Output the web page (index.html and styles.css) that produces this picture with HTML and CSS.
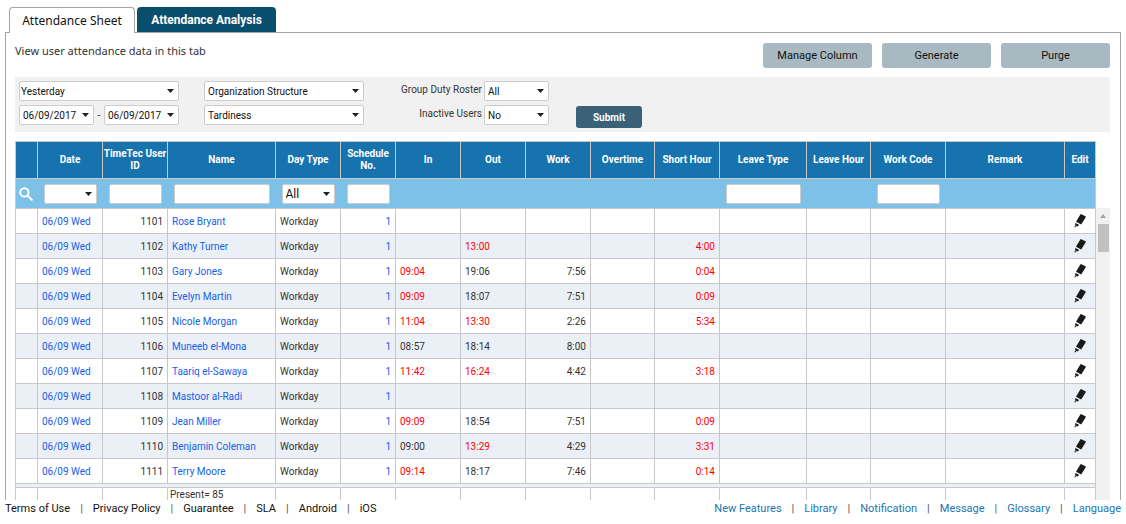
FILE: index.html
```
<!DOCTYPE html>
<html lang="en">
	<head>
		<meta charset="UTF-8" />
		<meta name="viewport" content="width=device-width, initial-scale=1.0" />
		<title>Attendance Sheet</title>
		<link rel="stylesheet" href="styles.css">
	</head>
	<body>
		<svg class="sprite" aria-hidden="true">
			<symbol id="pencil" viewBox="0 0 12 14">
				<path d="M7.4 0.2 11.4 2.3Q12 2.7 11.6 3.4L7.2 10.600 2 7.800 6.200 0.700Q6.700-.1 7.400.2Z" />
				<path d="M1.400 8.900 5.300 11.100 3.300 12.400 1 11.200ZM.8 11.800 2.500 12.800.6 13.600Z" />
			</symbol>
		</svg>
		<nav class="tabs">
			<a href="#" class="tab active">Attendance Sheet</a>
			<a href="#" class="tab">Attendance Analysis</a>
		</nav>
		<main class="panel">
			<div class="topbar">
				<p class="intro">View user attendance data in this tab</p>
				<div class="actions">
					<button class="btn">Manage Column</button>
					<button class="btn">Generate</button>
					<button class="btn">Purge</button>
				</div>
			</div>
			<form class="filters">
				<div class="filter-group">
					<select class="flush" aria-label="Period"><option>Yesterday</option></select>
					<div class="range">
						<select aria-label="From date"><option>06/09/2017</option></select>
						<span>-</span>
						<select aria-label="To date"><option>06/09/2017</option></select>
					</div>
				</div>
				<div class="filter-group">
					<select aria-label="Organization"><option>Organization Structure</option></select>
					<select aria-label="Attendance"><option>Tardiness</option></select>
				</div>
				<div class="filter-pairs">
					<label for="roster">Group Duty Roster</label>
					<select id="roster"><option>All</option></select>
					<label for="inactive">Inactive Users</label>
					<select id="inactive"><option>No</option></select>
				</div>
				<button type="button" class="submit">Submit</button>
			</form>
			<div class="grid">
				<table class="sheet">
					<colgroup>
						<col class="w-find" /><col class="w-mid" /><col class="w-mid" />
						<col class="w-name" /><col class="w-mid" /><col class="w-sched" />
						<col class="w-mid" /><col class="w-mid" /><col class="w-mid" />
						<col class="w-hour" /><col class="w-mid" /><col class="w-leave" />
						<col class="w-hour" /><col class="w-code" /><col /><col class="w-edit" />
					</colgroup>
					<thead>
						<tr class="heads">
							<th></th>
							<th>Date</th>
							<th>TimeTec User<br />ID</th>
							<th>Name</th>
							<th>Day Type</th>
							<th>Schedule<br />No.</th>
							<th>In</th>
							<th>Out</th>
							<th>Work</th>
							<th>Overtime</th>
							<th>Short Hour</th>
							<th>Leave Type</th>
							<th>Leave Hour</th>
							<th>Work Code</th>
							<th>Remark</th>
							<th>Edit</th>
						</tr>
						<tr class="search">
							<td class="find">
								<svg viewBox="0 0 14 14" aria-hidden="true">
									<circle cx="5.4" cy="5.4" r="4.2" />
									<path d="M8.6 8.6 12.8 12.8" />
								</svg>
							</td>
							<td><select aria-label="Date"><option></option></select></td>
							<td><input type="text" aria-label="TimeTec User ID" /></td>
							<td><input type="text" aria-label="Name" /></td>
							<td><select class="large" aria-label="Day Type"><option>All</option></select></td>
							<td><input type="text" aria-label="Schedule No." /></td>
							<td></td>
							<td></td>
							<td></td>
							<td></td>
							<td></td>
							<td><input type="text" aria-label="Leave Type" /></td>
							<td></td>
							<td><input type="text" aria-label="Work Code" /></td>
							<td></td>
							<td></td>
						</tr>
					</thead>
					<tbody id="rows"></tbody>
					<tfoot>
						<tr class="spacer">
							<td colspan="16"></td>
						</tr>
						<tr class="totals">
							<td></td>
							<td></td>
							<td></td>
							<td>Present= 85</td>
							<td></td>
							<td></td>
							<td></td>
							<td></td>
							<td></td>
							<td></td>
							<td></td>
							<td></td>
							<td></td>
							<td></td>
							<td></td>
							<td></td>
						</tr>
					</tfoot>
				</table>
				<div class="scrollbar">
					<div class="arrow"></div>
					<div class="thumb"></div>
				</div>
			</div>
		</main>
		<footer class="footer">
			<nav class="links">
				<a href="#">Terms of Use</a>
				<a href="#">Privacy Policy</a>
				<a href="#">Guarantee</a>
				<a href="#">SLA</a>
				<a href="#">Android</a>
				<a href="#">iOS</a>
			</nav>
			<nav class="links blue">
				<a href="#">New Features</a>
				<a href="#">Library</a>
				<a href="#">Notification</a>
				<a href="#">Message</a>
				<a href="#">Glossary</a>
				<a href="#">Language</a>
			</nav>
		</footer>
		<script>
			// id, name, in, out, work, short hour ("!" marks a late or early punch)
			const users = [
				["1101", "Rose Bryant", "", "", "", ""],
				["1102", "Kathy Turner", "", "!13:00", "", "4:00"],
				["1103", "Gary Jones", "!09:04", "19:06", "7:56", "0:04"],
				["1104", "Evelyn Martin", "!09:09", "18:07", "7:51", "0:09"],
				["1105", "Nicole Morgan", "!11:04", "!13:30", "2:26", "5:34"],
				["1106", "Muneeb el-Mona", "08:57", "18:14", "8:00", ""],
				["1107", "Taariq el-Sawaya", "!11:42", "!16:24", "4:42", "3:18"],
				["1108", "Mastoor al-Radi", "", "", "", ""],
				["1109", "Jean Miller", "!09:09", "18:54", "7:51", "0:09"],
				["1110", "Benjamin Coleman", "09:00", "!13:29", "4:29", "3:31"],
				["1111", "Terry Moore", "!09:14", "18:17", "7:46", "0:14"],
			];

			function punch(time) {
				if (time[0] === "!") return `<td class="red">${time.slice(1)}</td>`;
				return `<td>${time}</td>`;
			}

			document.querySelector("#rows").innerHTML = users
				.map(
					([id, name, timeIn, timeOut, work, short]) => `<tr>
						<td></td>
						<td><a href="#">06/09 Wed</a></td>
						<td class="num">${id}</td>
						<td><a href="#">${name}</a></td>
						<td>Workday</td>
						<td class="num"><a href="#">1</a></td>
						${punch(timeIn)}
						${punch(timeOut)}
						<td class="num">${work}</td>
						<td></td>
						<td class="num red">${short}</td>
						<td></td>
						<td></td>
						<td></td>
						<td></td>
						<td class="edit"><button aria-label="Edit ${name}"><svg><use href="#pencil" /></svg></button></td>
					</tr>`
				)
				.join("");
		</script>
	</body>
</html>
```

FILE: styles.css
```
* {
	box-sizing: border-box;
}
body {
	display: flex;
	flex-direction: column;
	height: 100vh;
	margin: 0;
	padding: 7px 5px 0;
	overflow: hidden;
	background: #fff;
	color: #333;
	font-family: Roboto, "Noto Sans", sans-serif;
	font-size: 10px;
}
a {
	color: #1660ea;
	text-decoration: none;
}
button,
input,
select {
	font-family: inherit;
	font-size: inherit;
	margin: 0;
}
button {
	cursor: pointer;
}
.sprite {
	display: none;
}

/* tabs */
.tabs {
	display: flex;
	gap: 2px;
	padding-left: 4px;
	height: 25px;
	flex: none;
}
.tab {
	display: flex;
	align-items: center;
	justify-content: center;
	width: 139px;
	background: #0a4e6e;
	border-radius: 4px 4px 0 0;
	color: #fff;
	font-size: 12px;
	font-weight: 700;
}
.tab.active {
	width: 126px;
	height: 26px;
	background: #fff;
	border: 1px solid #a5a5a5;
	border-bottom: none;
	color: #111;
	font-family: "Noto Sans", sans-serif;
	font-weight: 400;
	z-index: 1;
}
.panel {
	flex: 1;
	min-height: 0;
	overflow: hidden;
	border: 1px solid #a5a5a5;
	border-bottom: none;
	padding: 10px 10px 0 9px;
}
.topbar {
	display: flex;
	justify-content: space-between;
	height: 34px;
}
.intro {
	margin: 0;
	font-family: "Noto Sans", sans-serif;
	font-size: 11px;
	line-height: 16px;
}
.actions {
	display: flex;
	gap: 10px;
}
.btn {
	width: 109px;
	height: 25px;
	padding: 0;
	border: none;
	border-radius: 3px;
	background: #a8b9c2;
	color: #111;
	font-size: 11px;
}

/* filters */
.filters {
	display: flex;
	align-items: flex-start;
	height: 55px;
	padding: 4px;
	background: #f1f1f1;
}
select,
input {
	height: 20px;
	border: 1px solid #ccc;
	border-radius: 2px;
	background: #fff;
	color: #111;
	padding: 0 3px;
}
select {
	appearance: none;
	background: #fff url("data:image/svg+xml,%3Csvg xmlns='http://www.w3.org/2000/svg' width='7' height='4'%3E%3Cpath d='M0 0h7L3.5 4z' fill='%23222'/%3E%3C/svg%3E") no-repeat right 4px center;
}
select.flush {
	padding-left: 1px;
}
.filter-group {
	display: flex;
	flex-direction: column;
	gap: 4px;
	width: 160px;
	margin-right: 25px;
}
.range {
	display: flex;
	align-items: center;
	justify-content: space-between;
}
.range select {
	width: 75px;
}
.filter-pairs {
	display: grid;
	grid-template-columns: 93px 65px;
	gap: 4px 2px;
	text-align: right;
}
.filter-pairs label {
	line-height: 18px;
	white-space: nowrap;
}
.submit {
	align-self: flex-end;
	width: 66px;
	height: 22px;
	margin-left: 27px;
	padding: 0;
	border: none;
	border-radius: 3px;
	background: #3a6178;
	color: #fff;
	font-weight: 700;
}

/* attendance table */
.grid {
	display: flex;
	margin-top: 9px;
}
.sheet {
	flex: 1;
	width: 100%;
	table-layout: fixed;
	border-collapse: collapse;
}
.w-find {
	width: 22px;
}
.w-mid {
	width: 65px;
}
.w-hour {
	width: 64px;
}
.w-name {
	width: 108px;
}
.w-sched {
	width: 55px;
}
.w-leave {
	width: 87px;
}
.w-code {
	width: 75px;
}
.w-edit {
	width: 31px;
}
.sheet th,
.sheet td {
	border: 1px solid #c8c8c8;
	padding: 0 4px;
	white-space: nowrap;
}
.sheet th {
	height: 37px;
	padding: 0;
	background: #1673ae;
	color: #fff;
	font-weight: 700;
	line-height: 12px;
}
.sheet .search td {
	height: 30px;
	padding: 0 6px;
	border-width: 1px 0;
	background: #7dc0e8;
}
.sheet .search td:first-child {
	border-left-width: 1px;
}
.sheet .search td:last-child {
	border-right-width: 1px;
}
.search input,
.search select {
	display: block;
	width: 100%;
}
.search .large {
	font-size: 12px;
}
.sheet .search .find {
	padding: 0 3px;
}
.find svg {
	display: block;
	width: 14px;
	height: 14px;
	fill: none;
	stroke: #fff;
	stroke-width: 2;
	stroke-linecap: round;
}
tbody td {
	height: 25px;
}
tbody tr:nth-child(even),
.spacer {
	background: #eaf0f6;
}
.sheet .num {
	text-align: right;
}
.sheet .red {
	color: #f00;
}
.sheet .edit {
	padding: 0;
	text-align: center;
}
.edit button {
	display: block;
	width: 12px;
	height: 14px;
	margin: 0 auto;
	padding: 0;
	border: none;
	background: none;
}
.edit svg {
	display: block;
	width: 12px;
	height: 14px;
	fill: #1a1a1a;
}
.spacer td {
	height: 4px;
}
.sheet .totals td {
	height: 22px;
	padding: 0 2px;
	line-height: 14px;
	vertical-align: top;
}
.scrollbar {
	width: 14px;
	margin-top: 67px;
	padding-top: 6px;
	background: #f1f1f1;
}
.arrow {
	width: 0;
	margin: 0 auto 6px;
	border: 3px solid transparent;
	border-top: none;
	border-bottom: 4px solid #a3a3a3;
}
.thumb {
	width: 11px;
	height: 28px;
	margin: 0 auto;
	background: #c1c1c1;
}

/* footer */
.footer {
	display: flex;
	flex: none;
	justify-content: space-between;
	height: 24px;
	font-size: 11px;
	line-height: 18px;
}
.links {
	display: flex;
}
.links a {
	color: #111;
}
.links a + a::before {
	content: "|";
	margin: 0 10px;
	color: #555;
}
.links.blue a {
	color: #1b75b0;
}
```
